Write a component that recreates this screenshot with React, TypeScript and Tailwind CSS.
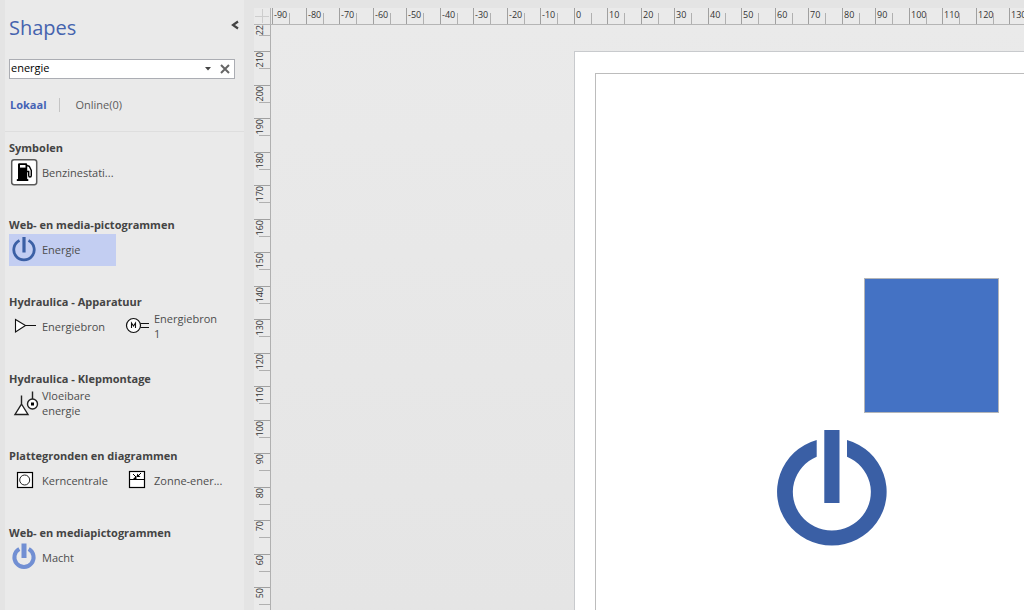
import type { ReactNode } from "react";
import { useState } from "react";

type Shape = { label: string; icon: ReactNode; selected?: boolean };
type Stencil = { title: string; shapes: Shape[] };

function IconFrame({ children }: { children: ReactNode }) {
  return (
    <svg viewBox="0 0 30 32" className="h-8 w-[30px] shrink-0" fill="none" aria-hidden="true">
      {children}
    </svg>
  );
}

const pump = (
  <IconFrame>
    <rect x="2.7" y="2.7" width="25" height="25" rx="2.4" fill="#fff" stroke="#5a5a5a" strokeWidth="1.5" />
    <path d="M9 7.500q0-1.200 1.200-1.200h6.800q1.200 0 1.200 1.200v14.400l1.100.300v1.800H7.800v-1.800l1.200-.300z" fill="#000" />
    <rect x="11" y="8" width="5.500" height="2.600" fill="#fff" />
    <path d="M18 8.500l2.300.800 2 4.200v5q0 1.500-1.300 1.500t-1.300-1.500v-4h-1.700" stroke="#000" strokeWidth="1.400" />
  </IconFrame>
);

const power = (
  <IconFrame>
    <path d="M10.500 6.600A10.200 10.200 0 1 0 19.500 6.600" stroke="#3b60a5" strokeWidth="2.800" />
    <path d="M15 3v15.500" stroke="#3b60a5" strokeWidth="3.200" />
  </IconFrame>
);

const powerSoft = (
  <IconFrame>
    <path d="M10.300 7A9.600 9.600 0 1 0 19.700 7" stroke="#718fd3" strokeWidth="4" />
    <path d="M15 1.500v14.500" stroke="#718fd3" strokeWidth="5" />
  </IconFrame>
);

const source = (
  <IconFrame>
    <path d="M6.500 8.500v12.500L16.500 14.500zM16.500 14.500H27" fill="#fff" stroke="#111" strokeWidth="1.100" />
  </IconFrame>
);

const motor = (
  <IconFrame>
    <circle cx="12.500" cy="14.500" r="7" fill="#fff" stroke="#111" strokeWidth="1.200" />
    <path d="M10.500 17v-5l2 3 2-3v5M19.500 12.500H28M19.500 16.500H28" stroke="#111" strokeWidth="1.100" />
  </IconFrame>
);

const liquid = (
  <IconFrame>
    <path d="M12.500 7.500v8.500l-6.500 10.500h13l-6.500-10.500M23.500 3.500v7.500" fill="#fff" stroke="#222" strokeWidth="1.400" />
    <circle cx="23.500" cy="16" r="5" fill="#fff" stroke="#222" strokeWidth="1.400" />
    <rect x="22" y="14.500" width="3" height="3" fill="#000" />
  </IconFrame>
);

const nuclear = (
  <IconFrame>
    <rect x="8.500" y="7.500" width="15" height="15" fill="#fff" stroke="#000" strokeWidth="1.200" />
    <circle cx="15.700" cy="15" r="5" stroke="#222" />
  </IconFrame>
);

const solar = (
  <IconFrame>
    <rect x="8.500" y="6.500" width="15" height="16" fill="#fff" stroke="#000" strokeWidth="1.200" />
    <path d="M8.500 14.500h15M12 9l3 3M20 8l-3.500 3.500" stroke="#000" />
    <path d="M15.500 10.500V14H12zM16 8.500V12h3.500z" fill="#000" />
  </IconFrame>
);

const stencils: Stencil[] = [
  { title: "Symbolen", shapes: [{ label: "Benzinestati...", icon: pump }] },
  { title: "Web- en media-pictogrammen", shapes: [{ label: "Energie", icon: power, selected: true }] },
  {
    title: "Hydraulica - Apparatuur",
    shapes: [
      { label: "Energiebron", icon: source },
      { label: "Energiebron 1", icon: motor },
    ],
  },
  { title: "Hydraulica - Klepmontage", shapes: [{ label: "Vloeibare energie", icon: liquid }] },
  {
    title: "Plattegronden en diagrammen",
    shapes: [
      { label: "Kerncentrale", icon: nuclear },
      { label: "Zonne-ener...", icon: solar },
    ],
  },
  { title: "Web- en mediapictogrammen", shapes: [{ label: "Macht", icon: powerSoft }] },
];

function ShapesPanel() {
  const [query, setQuery] = useState("energie");
  return (
    <aside className="w-[239px] shrink-0 bg-[#eaeaea]">
      <header className="flex items-start justify-between pt-3 pr-[5px] pl-1">
        <h1 className="text-[20px] leading-8 text-[#4563ae]">Shapes</h1>
        <button type="button" aria-label="Deelvenster samenvouwen" className="flex h-[26px] w-2 items-center">
          <svg viewBox="0 0 8 10" className="h-[10px] w-2" fill="none" aria-hidden="true">
            <path d="M7 1.500L2 5l5 3.500" stroke="#444" strokeWidth="2.200" />
          </svg>
        </button>
      </header>

      <div className="mt-[15px] mr-[9px] ml-1 flex h-5 items-center border border-[#abadb3] bg-white">
        <input
          type="text"
          aria-label="Vormen zoeken"
          value={query}
          onChange={(e) => setQuery(e.target.value)}
          className="h-full min-w-0 flex-1 pb-1 pl-px text-[11px] text-black outline-none"
        />
        <button type="button" aria-label="Zoekgeschiedenis" className="flex h-full w-4 items-center justify-center">
          <svg viewBox="0 0 6 4" className="h-1 w-[6px]" aria-hidden="true">
            <path d="M0 0h6L3 3.500z" fill="#444" />
          </svg>
        </button>
        <button type="button" aria-label="Wissen" className="flex h-full w-[18px] items-center justify-center">
          <svg viewBox="0 0 10 10" className="size-[10px]" fill="none" aria-hidden="true">
            <path d="M1 1l8 8M9 1L1 9" stroke="#666" strokeWidth="2" />
          </svg>
        </button>
      </div>

      <nav className="flex h-[53px] items-center border-b border-[#dedede] pl-[5px] text-[11px]">
        <button type="button" className="font-bold text-[#4563b5]">Lokaal</button>
        <span className="mr-4 ml-3 h-[14px] w-px bg-[#c4c4c4]" />
        <button type="button" className="text-[#5c5c5c]">Online(0)</button>
      </nav>

      <div className="flex flex-col gap-[27px] pt-[7px] pl-1">
        {stencils.map((stencil) => (
          <section key={stencil.title}>
            <h2 className="pb-px text-[11px] leading-[17px] font-bold text-[#444]">{stencil.title}</h2>
            <div className="flex gap-[5px]">
              {stencil.shapes.map((shape) => (
                <button
                  key={shape.label}
                  type="button"
                  className={
                    shape.selected
                      ? "flex h-8 w-[107px] items-center gap-[3px] bg-[#c3cef2] text-left"
                      : "flex h-8 w-[107px] items-center gap-[3px] text-left"
                  }
                >
                  {shape.icon}
                  <span className="max-w-[70px] pb-[2px] text-[11px] leading-[15px] text-[#4d4d4d]">
                    {shape.label}
                  </span>
                </button>
              ))}
            </div>
          </section>
        ))}
      </div>
    </aside>
  );
}

const horizontal = Array.from({ length: 23 }, (_, i) => -90 + i * 10).filter((v) => v <= 130);
const vertical = Array.from({ length: 17 }, (_, i) => 210 - i * 10);

function TopRuler() {
  return (
    <div className="flex h-[17px] min-w-0 flex-1 overflow-hidden border-b border-[#b5b5b5] pl-px">
      {horizontal.map((value) => (
        <div key={value} className="flex shrink-0 items-end border-l border-[#a0a0a0] odd:w-[34px] even:w-[33px]">
          <span className="h-4 w-4 pl-px text-[9px] leading-[13px] text-[#333]">{value}</span>
          <span className="h-[11px] w-px bg-[#b0b0b0]" />
        </div>
      ))}
    </div>
  );
}

function SideRuler() {
  return (
    <div className="flex w-[17px] shrink-0 flex-col overflow-hidden border-r border-[#b0b0b0]">
      <div className="flex h-[26px] shrink-0 flex-col items-end">
        <div className="flex h-[10px] w-full shrink-0 items-end overflow-hidden">
          <span className="rotate-180 text-[9px] leading-[11px] text-[#333] [writing-mode:vertical-rl]">22</span>
        </div>
        <span className="h-px w-[11px] bg-[#b0b0b0]" />
      </div>
      {vertical.map((value) => (
        <div
          key={value}
          className="flex shrink-0 flex-col items-end border-t border-[#a0a0a0] odd:h-[33px] even:h-[34px]"
        >
          <div className="flex h-4 w-full items-start">
            <span className="rotate-180 text-[9px] leading-[11px] text-[#333] [writing-mode:vertical-rl]">
              {value}
            </span>
          </div>
          <span className="h-px w-[11px] bg-[#b0b0b0]" />
        </div>
      ))}
    </div>
  );
}

function Drawing() {
  return (
    <main className="relative min-w-0 flex-1 overflow-hidden bg-linear-to-b from-[#eaeaea] to-[#e5e5e5] pt-[26px] pl-[303px]">
      <div className="h-full border-t border-l border-[#c8cacd] bg-white pt-[21px] pl-5">
        <div className="h-full border-t border-l border-[#bcbcbc]" />
      </div>
      <div className="absolute top-[253px] left-[593px] size-[135px] border border-[#b3b5b8] bg-[#4472c4]" />
      <svg
        viewBox="0 0 110 116"
        className="absolute top-[405px] left-[506px] h-[116px] w-[110px]"
        role="img"
        aria-label="Energie"
      >
        <path
          d="M39.700 10A54.800 53.800 0 1 0 70 10V26.700A39 38.400 0 1 1 39.700 26.700zM47.300 0H62.500V73H47.300z"
          fill="#3a5fa5"
        />
      </svg>
    </main>
  );
}

export default function App() {
  return (
    <div className="flex h-screen overflow-hidden bg-[#e4e4e4] pl-[5px] font-['Open_Sans','Noto_Sans',sans-serif]">
      <ShapesPanel />
      <div className="ml-[10px] flex min-w-0 flex-1 flex-col bg-[#eaeaea]">
        <div className="h-2 shrink-0 bg-[#e4e4e4]" />
        <div className="flex shrink-0">
          <div className="flex h-[17px] w-[17px] items-center justify-center border-r border-b border-[#b5b5b5]">
            <svg viewBox="0 0 14 14" className="size-[14px]" aria-hidden="true">
              <path d="M7.500 0v14M0 7.500h14" stroke="#cdcdcd" />
            </svg>
          </div>
          <TopRuler />
        </div>
        <div className="flex min-h-0 flex-1">
          <SideRuler />
          <Drawing />
        </div>
      </div>
    </div>
  );
}
